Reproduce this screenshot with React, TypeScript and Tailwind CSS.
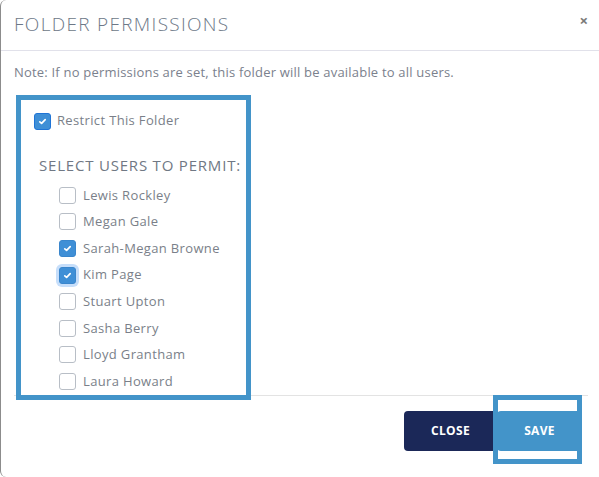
import React from 'react';
import clsx from 'clsx';

const users = [
  { name: 'Lewis Rockley', checked: false },
  { name: 'Megan Gale', checked: false },
  { name: 'Sarah-Megan Browne', checked: true },
  { name: 'Kim Page', checked: true, focus: true },
  { name: 'Stuart Upton', checked: false },
  { name: 'Sasha Berry', checked: false },
  { name: 'Lloyd Grantham', checked: false },
  { name: 'Laura Howard', checked: false },
];

const Check: React.FC<{ checked?: boolean; focus?: boolean; dark?: boolean }> = ({ checked, focus, dark }) => (
  <span
    className={clsx(
      'flex h-[17px] w-[17px] shrink-0 items-center justify-center rounded-[3px] border',
      checked ? 'bg-[#3f8fd6]' : 'border-[#b8bec6] bg-white',
      checked && (dark ? 'border-[#1f74d6]' : 'border-[#3a86cc]'),
      focus && 'ring-[3px] ring-[#c6defa]'
    )}
  >
    {checked && (
      <svg width="9" height="9" viewBox="0 0 9 9">
        <path d="M1.8 4.8 3.6 6.4 7.2 2.6" stroke="#fff" strokeWidth="1.7" fill="none" strokeLinecap="round" strokeLinejoin="round" />
      </svg>
    )}
  </span>
);

export default function App() {
  return (
    <div className="h-[477px] w-[599px] overflow-hidden bg-white" style={{ fontFamily: '"Open Sans", "Noto Sans", sans-serif' }}>
      <div className="flex h-full flex-col rounded-l-[6px] border-l border-[#8c8c8c]">
        {/* Header */}
        <div className="flex h-[51px] items-start justify-between border-b border-[#e1e1ea] pl-[13px] pr-[11px] pt-[10px]">
          <h2 className="text-[19px] font-light tracking-[1.3px] text-[#6d7887]">FOLDER PERMISSIONS</h2>
          <span className="pt-[1px] text-[15px] font-bold leading-[18px] text-[#7a7a7a]">×</span>
        </div>

        {/* Body */}
        <div className="pl-[13px] pt-[11px]">
          <p className="h-[20px] text-[13px] leading-[20px] tracking-[0.2px] text-[#7b818d]">
            Note: If no permissions are set, this folder will be available to all users.
          </p>
          <div className="relative z-10 ml-[2px] mt-[13px] h-[305px] w-[235px] border-[5px] border-[#4394c9] bg-white">
            <div className="mt-[11px] flex h-[20px] items-center gap-[6px] pl-[13px]">
              <Check checked dark />
              <span className="text-[13px] tracking-[0.35px] text-[#7a7f89]">Restrict This Folder</span>
            </div>
            <div className="mt-[24px] h-[20px] pl-[18px] text-[15px] leading-[20px] tracking-[0.8px] text-[#707884]">
              SELECT USERS TO PERMIT:
            </div>
            <div className="mt-[7px] pl-[38px]">
              {users.map((u) => (
                <div key={u.name} className="flex h-[26.6px] items-center gap-[7px]">
                  <Check checked={u.checked} focus={u.focus} />
                  <span className="text-[13px] tracking-[0.35px] text-[#7a7f89]">{u.name}</span>
                </div>
              ))}
            </div>
          </div>
        </div>

        {/* Footer */}
        <div className="-mt-[5px] ml-[13px] mr-[11px] flex justify-end border-t border-[#e3e3e3] pr-[6px] pt-[15px]">
          <button className="h-[40px] w-[93px] rounded-[4px] bg-[#1b2858] text-[12px] font-bold tracking-[0.3px] text-white">
            CLOSE
          </button>
          <div className="relative">
            <button className="h-[40px] w-[85px] rounded-[4px] bg-[#4394c9] text-[12px] font-bold tracking-[0.3px] text-white">
              SAVE
            </button>
            <div className="pointer-events-none absolute left-[-4px] top-[-16px] h-[69px] w-[89px] border-[5px] border-[#4394c9]" />
          </div>
        </div>
      </div>
    </div>
  );
}
